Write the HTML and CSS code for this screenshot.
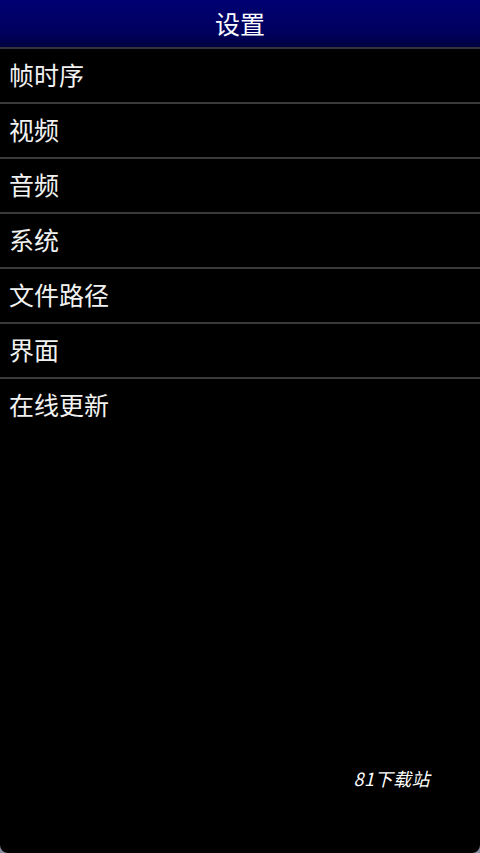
FILE: index.html
```html
<!DOCTYPE html>
<html lang="zh">
<head>
<meta charset="utf-8">
<link rel="stylesheet" href="styles.css">
</head>
<body>
<div class="screen">
  <header class="title-bar">设置</header>
  <ul class="menu">
    <li class="item">帧时序</li>
    <li class="item">视频</li>
    <li class="item">音频</li>
    <li class="item">系统</li>
    <li class="item">文件路径</li>
    <li class="item">界面</li>
    <li class="item last">在线更新</li>
  </ul>
  <div class="footer"><span class="mark">81下载站</span></div>
</div>
</body>
</html>
```

FILE: styles.css
```css
html, body {
  margin: 0;
  padding: 0;
  background: #8a8fa0;
}
.screen {
  width: 480px;
  height: 853px;
  background: #000;
  display: flex;
  flex-direction: column;
  border-radius: 0 0 8px 8px;
  overflow: hidden;
  font-family: "Noto Sans CJK SC", "Noto Sans", sans-serif;
  color: #f2f2f2;
}
.title-bar {
  height: 45px;
  flex: 0 0 auto;
  background: linear-gradient(#000072, #00005e 70%, #000040);
  border-bottom: 2px solid #34343e;
  display: flex;
  align-items: center;
  justify-content: center;
  font-size: 25px;
  color: #fff;
  padding-bottom: 2px;
}
.menu {
  list-style: none;
  margin: 0;
  padding: 0;
}
.item {
  height: 50px;
  border-bottom: 2px solid #3a3a3a;
  display: flex;
  align-items: center;
  padding: 0 0 3px 9px;
  font-size: 25px;
  line-height: 1;
}
.item.last {
  border-bottom: none;
}
.footer {
  flex: 1;
  display: flex;
  align-items: flex-end;
  justify-content: flex-end;
  padding: 0 50px 62px 0;
}
.mark {
  font-family: "Noto Sans CJK SC", sans-serif;
  font-size: 18px;
  font-style: italic;
  letter-spacing: 0.5px;
  color: #fff;
}
```
